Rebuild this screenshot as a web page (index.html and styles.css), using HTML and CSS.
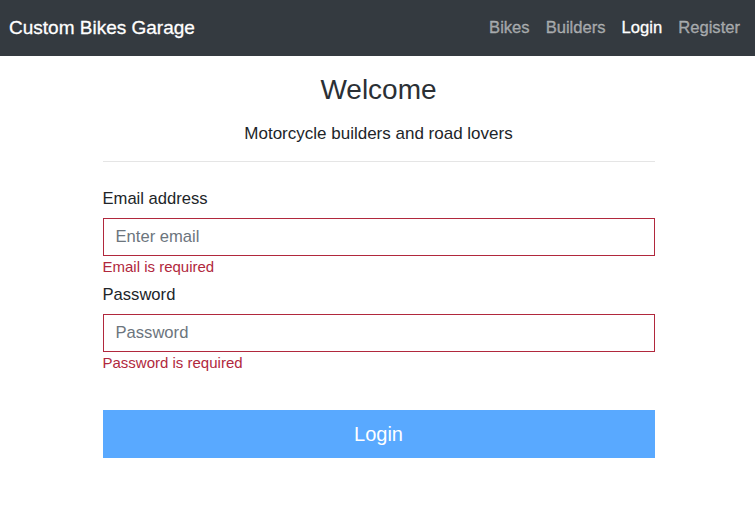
FILE: index.html
```html
<!DOCTYPE html>
<html>
<head>
<meta charset="utf-8">
<link rel="stylesheet" href="styles.css">
</head>
<body>
<nav class="navbar">
  <a class="brand">Custom Bikes Garage</a>
  <ul class="nav">
    <li><a class="nav-link">Bikes</a></li>
    <li><a class="nav-link">Builders</a></li>
    <li><a class="nav-link active">Login</a></li>
    <li><a class="nav-link">Register</a></li>
  </ul>
</nav>
<main class="container">
  <h3 class="title">Welcome</h3>
  <p class="subtitle">Motorcycle builders and road lovers</p>
  <hr class="divider">
  <form class="form">
    <div class="group">
      <label class="label">Email address</label>
      <input class="input" type="email" placeholder="Enter email">
      <div class="feedback">Email is required</div>
    </div>
    <div class="group">
      <label class="label">Password</label>
      <input class="input" type="password" placeholder="Password">
      <div class="feedback">Password is required</div>
    </div>
    <button class="btn" type="button">Login</button>
  </form>
</main>
</body>
</html>
```
FILE: styles.css
```css
* { box-sizing: border-box; }
html, body { margin: 0; padding: 0; }
body {
  font-family: "Liberation Sans", Arial, sans-serif;
  font-size: 16px;
  color: #212529;
  background: #fff;
}
.navbar {
  height: 56px;
  background: #343a40;
  display: flex;
  align-items: center;
  justify-content: space-between;
  padding: 0 7px 0 9px;
}
.brand {
  color: #fff;
  font-size: 19px;
  line-height: 30px;
  -webkit-text-stroke: 0.3px #fff;
}
.nav {
  list-style: none;
  margin: 0;
  padding: 0;
  display: flex;
}
.nav-link {
  display: block;
  padding: 0 8px;
  color: rgba(255,255,255,.5);
  font-size: 16.6px;
  line-height: 24px;
  -webkit-text-stroke: 0.3px rgba(255,255,255,.5);
}
.nav-link.active { color: #fff; -webkit-text-stroke: 0.3px #fff; }
.container {
  width: 552px;
  margin: 0 auto;
  transform: translateX(1px);
  padding-top: 17px;
}
.title {
  margin: 0;
  text-align: center;
  font-size: 28px;
  font-weight: 400;
  line-height: 34px;
  color: #2b3035;
}
.subtitle {
  margin: 15px 0 0;
  text-align: center;
  font-size: 17px;
  line-height: 24px;
}
.divider {
  margin: 15px 0 0;
  border: 0;
  border-top: 1px solid rgba(0,0,0,.1);
}
.form { padding-top: 25px; }
.group { margin-bottom: 7px; }
.label {
  display: block;
  font-size: 16.6px;
  line-height: 24px;
  margin-bottom: 7px;
}
.input {
  display: block;
  width: 100%;
  height: 38px;
  padding: 6px 12px;
  font-family: inherit;
  font-size: 16.6px;
  color: #495057;
  border: 1px solid #b1283d;
  border-radius: 0;
  outline: none;
  background: #fff;
}
.input::placeholder { color: #6c757d; opacity: 1; }
.feedback {
  margin-top: 2px;
  font-size: 15px;
  line-height: 18px;
  color: #b1283d;
}
.btn {
  display: block;
  width: 100%;
  height: 48px;
  margin-top: 38px;
  border: 0;
  border-radius: 0;
  background: #59a9ff;
  color: #fff;
  font-family: inherit;
  font-size: 20px;
}
```
